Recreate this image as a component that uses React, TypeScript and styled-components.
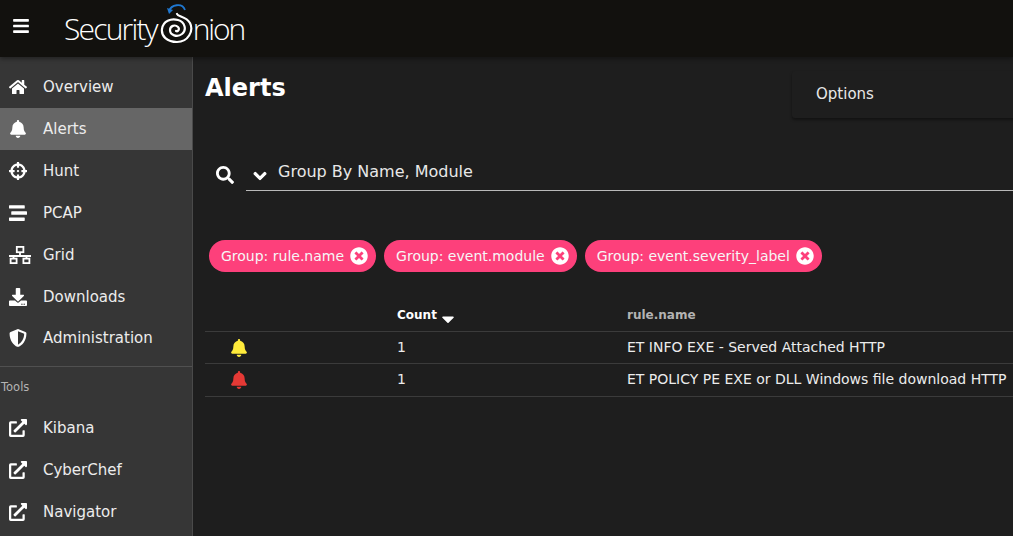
import React from "react";
import styled, { createGlobalStyle } from "styled-components";
import {
  FaBars, FaHome, FaBell, FaCrosshairs, FaStream, FaDownload,
  FaShieldAlt, FaExternalLinkAlt, FaSearch, FaChevronDown, FaTimesCircle, FaCaretDown,
} from "react-icons/fa";

const Global = createGlobalStyle`
  html, body { margin: 0; padding: 0; background: #1e1e1e; overflow: hidden; }
  body { font-family: "DejaVu Sans", sans-serif; color: #fff; }
`;

const Page = styled.div`
  width: 1013px; height: 536px; display: flex; flex-direction: column; overflow: hidden; background: #1e1e1e;
`;
const Header = styled.header`
  height: 57px; flex: none; background: #12110e; display: flex; align-items: center; padding-left: 13px;
  box-shadow: 0 2px 4px rgba(0,0,0,.35); position: relative; z-index: 2;
`;
const Burger = styled.span`
  display: flex; color: #fff; width: 16px; margin-top: -5px;
  svg { width: auto; height: 18px; }
`;
const Logo = styled.div`
  margin-left: 35px; display: flex; align-items: center; font-family: "Open Sans", sans-serif; font-weight: 300;
  font-size: 30px; letter-spacing: -1.8px; color: #fff;
`;
const LogoTail = styled.span`
  letter-spacing: -2.1px;
`;
const LogoMark = styled.svg`
  width: 34px; height: 42px; margin: -10px -1px 0 3px; flex: none;
`;
const Body = styled.div`
  flex: 1; display: flex; min-height: 0;
`;
const Side = styled.nav`
  width: 192px; flex: none; background: #363636; border-right: 1px solid #4a4a4a; padding-top: 9px;
`;
const Item = styled.div<{ $active?: boolean; $short?: boolean }>`
  height: ${p => (p.$short ? "40px" : "42px")}; display: flex; align-items: center; padding-left: 9px; font-size: 15px;
  color: #ececec; background: ${p => (p.$active ? "#666666" : "transparent")};
`;
const IconSlot = styled.span`
  width: 34px; flex: none; display: flex; color: #fff;
  svg { width: auto; height: 18px; }
`;
const Divider = styled.div`
  height: 1px; background: #505050; margin-top: 8px;
`;
const SectionLabel = styled.div`
  font-size: 11.5px; color: #b4b4b4; padding-left: 1px; height: 40px; line-height: 40px;
`;
const Main = styled.main`
  flex: 1; min-width: 0; padding: 0 0 0 12px; position: relative;
`;
const Title = styled.h1`
  margin: 0; font-size: 24px; line-height: 62px; font-weight: 700; color: #fff; height: 60px;
`;
const OptionsPanel = styled.div`
  position: absolute; left: 599px; top: 14px; width: 240px; height: 47px; box-sizing: border-box;
  background: #1e1e1e; padding-left: 24px; font-size: 15px; line-height: 46px; color: #e8e8e8;
  box-shadow: 0 2px 3px rgba(0,0,0,.4); border-radius: 3px;
`;
const SearchRow = styled.div`
  margin-top: 33px; display: flex; align-items: flex-end; height: 41px;
`;
const SearchIcon = styled.span`
  width: 41px; flex: none; display: flex; box-sizing: border-box;
  color: #fff; padding-bottom: 7px; padding-left: 11px;
  svg { width: auto; height: 18px; }
`;
const SearchField = styled.div`
  flex: 1; height: 41px; box-sizing: border-box; border-bottom: 1px solid #b9b9b9; display: flex; align-items: center;
  font-size: 16px; color: #e8e8e8; padding-top: 2px;
`;
const Chevron = styled.span`
  width: 32px; flex: none; display: flex; padding: 9px 0 0 7px; box-sizing: border-box; color: #fff;
  svg { width: auto; height: 14px; stroke: currentColor; stroke-width: 40px; }
`;
const Chips = styled.div`
  display: flex; gap: 8px; margin: 49px 0 0 4px;
`;
const Chip = styled.div`
  height: 32px; box-sizing: border-box; border-radius: 16px; background: #fd407b; display: flex; align-items: center;
  padding: 0 8px 0 12px; font-size: 14px; color: #f6f6f6; white-space: nowrap;
`;
const ChipClose = styled.span`
  display: flex; font-size: 18px; color: #fff; margin-left: 6px;
`;
const Table = styled.div`
  margin-top: 25px; font-size: 14px; color: #ececec;
`;
const Row = styled.div<{ $head?: boolean }>`
  display: grid; grid-template-columns: 192px 230px 1fr; align-items: center; box-sizing: border-box;
  height: ${p => (p.$head ? "35px" : "32px")}; padding-bottom: ${p => (p.$head ? "0" : "1px")};
  border-bottom: 1px solid #3b3b3b; white-space: nowrap;
  &:last-child { height: 33px; padding-bottom: 3px; }
`;
const HeadCell = styled.div<{ $muted?: boolean }>`
  font-size: 12px; font-weight: 700; color: ${p => (p.$muted ? "#b3b3b3" : "#fff")}; display: flex; align-items: center; padding-top: 1px;
`;
const Sort = styled.span`
  display: flex; margin: 8px 0 0 1px; height: 12px; align-items: center; color: #fff;
  svg { width: auto; height: 20px; }
`;
const BellCell = styled.div<{ $color: string }>`
  display: flex; padding: 2px 0 0 25px; color: ${p => p.$color};
  svg { width: auto; height: 18px; }
`;

const GridIcon = () => (
  <svg viewBox="0 0 22 18" fill="none" stroke="currentColor" strokeWidth="1.8">
    <rect x="7.8" y="0.9" width="6.6" height="5.3" />
    <path d="M11 6.2V10M0 10H22M4.5 10V12.6M17.5 10V12.6" />
    <rect x="1.6" y="12.6" width="6" height="4.5" />
    <rect x="14.4" y="12.6" width="6" height="4.5" />
  </svg>
);

const nav: [React.ComponentType, string][] = [
  [FaHome, "Overview"], [FaBell, "Alerts"], [FaCrosshairs, "Hunt"], [FaStream, "PCAP"],
  [GridIcon, "Grid"], [FaDownload, "Downloads"], [FaShieldAlt, "Administration"],
];
const tools = ["Kibana", "CyberChef", "Navigator"];
const chips = ["Group: rule.name", "Group: event.module", "Group: event.severity_label"];

export default function App() {
  return (
    <Page>
      <Global />
      <Header>
        <Burger><FaBars /></Burger>
        <Logo>
          Security
          <LogoMark viewBox="0 0 34 42" fill="none">
            <path d="M9 8 C11 2 22 -1 25 7" stroke="#1f78d1" strokeWidth="1.8" />
            <path d="M7 5 L9 11 L13 7 Z" fill="#1f78d1" />
            <path
              d="M17 11 C18 14 26 13 30 20 C34 28 28 39 17 39 C7 39 1 33 2 26 C3 18 11 15 18 17 C25 19 27 27 22 31 C17 35 10 32 10 27 C10 23 15 21 18 24 C20 26 18 29 16 28"
              stroke="#fff" strokeWidth="2.2" strokeLinecap="round"
            />
          </LogoMark>
          <LogoTail>nion</LogoTail>
        </Logo>
      </Header>
      <Body>
        <Side>
          {nav.map(([I, label]) => (
            <Item key={label} $active={label === "Alerts"} $short={label === "Administration"}>
              <IconSlot><I /></IconSlot>{label}
            </Item>
          ))}
          <Divider />
          <SectionLabel>Tools</SectionLabel>
          {tools.map(label => (
            <Item key={label}>
              <IconSlot><FaExternalLinkAlt /></IconSlot>{label}
            </Item>
          ))}
        </Side>
        <Main>
          <Title>Alerts</Title>
          <OptionsPanel>Options</OptionsPanel>
          <SearchRow>
            <SearchIcon><FaSearch /></SearchIcon>
            <SearchField>
              <Chevron><FaChevronDown /></Chevron>
              Group By Name, Module
            </SearchField>
          </SearchRow>
          <Chips>
            {chips.map(c => (
              <Chip key={c}>{c}<ChipClose><FaTimesCircle /></ChipClose></Chip>
            ))}
          </Chips>
          <Table>
            <Row $head>
              <div />
              <HeadCell>Count<Sort><FaCaretDown /></Sort></HeadCell>
              <HeadCell $muted>rule.name</HeadCell>
            </Row>
            <Row>
              <BellCell $color="#ffeb3b"><FaBell /></BellCell>
              <div>1</div>
              <div>ET INFO EXE - Served Attached HTTP</div>
            </Row>
            <Row>
              <BellCell $color="#e53935"><FaBell /></BellCell>
              <div>1</div>
              <div>ET POLICY PE EXE or DLL Windows file download HTTP</div>
            </Row>
          </Table>
        </Main>
      </Body>
    </Page>
  );
}
